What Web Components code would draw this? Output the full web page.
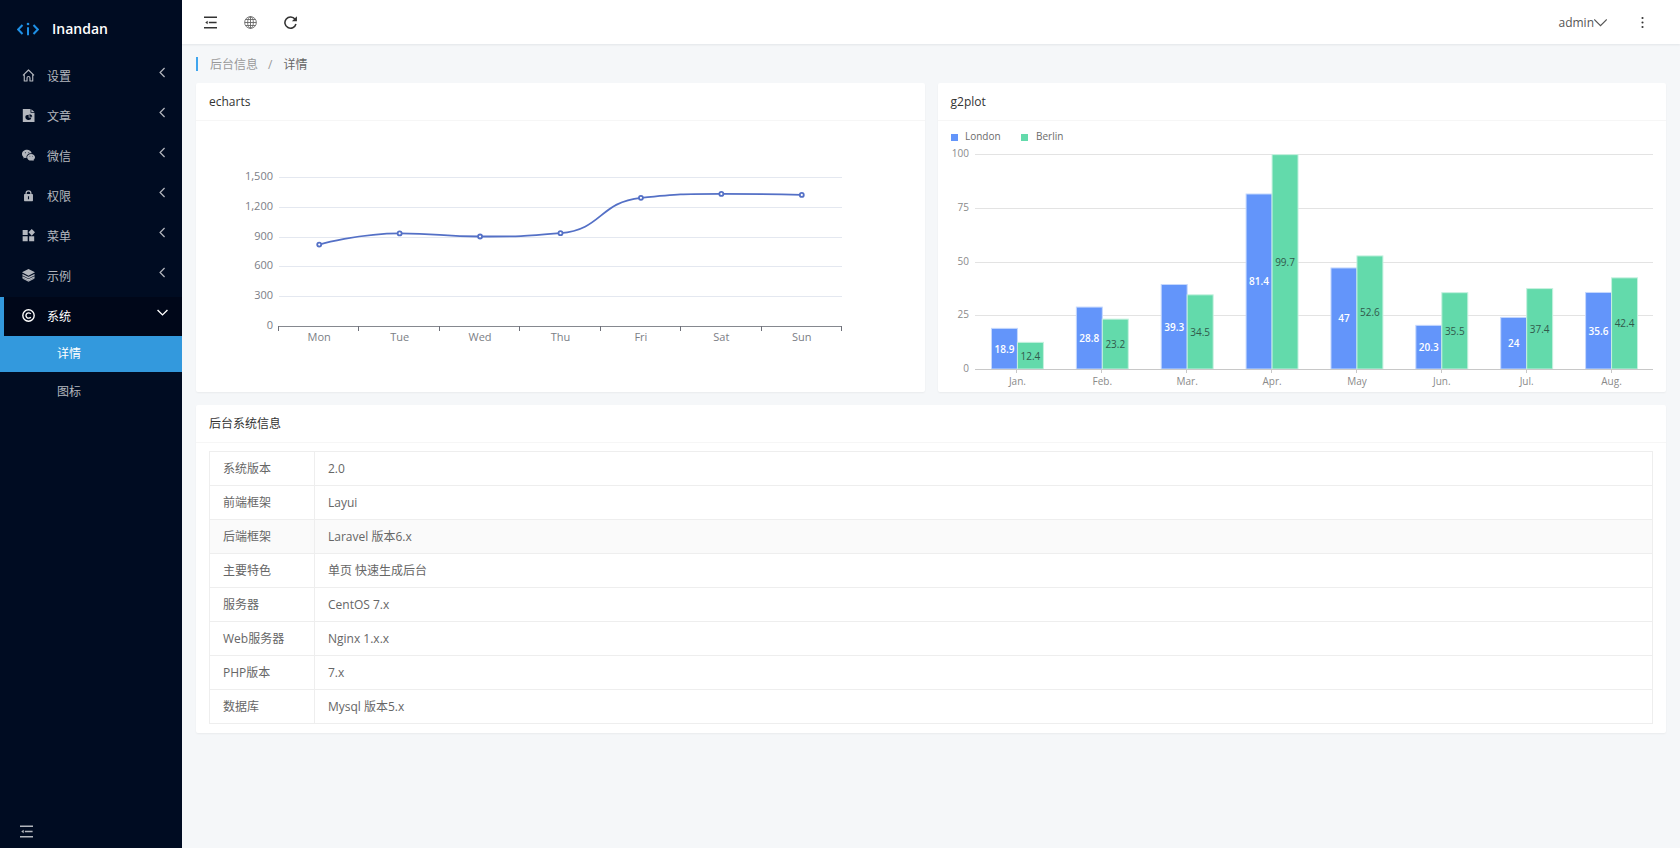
<!DOCTYPE html>
<html lang="zh-CN">
<head>
<meta charset="utf-8">
<meta name="viewport" content="width=device-width, initial-scale=1">
<title>Inandan</title>
<style>
html, body { margin: 0; height: 100%; }
body {
  font: 12px/20px "Open Sans", "Noto Sans CJK SC", sans-serif;
  color: #666;
  background: #f5f7f9;
}
</style>
</head>
<body>
<app-shell>
  <side-nav slot="side">
    <nav-group icon="home" label="设置"></nav-group>
    <nav-group icon="doc" label="文章"></nav-group>
    <nav-group icon="wechat" label="微信"></nav-group>
    <nav-group icon="lock" label="权限"></nav-group>
    <nav-group icon="blocks" label="菜单"></nav-group>
    <nav-group icon="layers" label="示例"></nav-group>
    <nav-group icon="copyright" label="系统" open>
      <nav-link href="#detail" active>详情</nav-link>
      <nav-link href="#icons">图标</nav-link>
    </nav-group>
  </side-nav>
  <top-bar slot="top" user="admin"></top-bar>
  <bread-crumb parent="后台信息" current="详情"></bread-crumb>
  <card-row>
    <panel-card heading="echarts"><line-chart></line-chart></panel-card>
    <panel-card heading="g2plot"><bar-chart></bar-chart></panel-card>
  </card-row>
  <panel-card heading="后台系统信息"><info-table></info-table></panel-card>
</app-shell>

<script>
const define = (name, template, setup) => {
  customElements.define(name, class extends HTMLElement {
    connectedCallback() {
      if (this.shadowRoot) return;
      const root = this.attachShadow({ mode: 'open' });
      root.innerHTML = typeof template === 'function' ? template(this) : template;
      if (setup) setup(this, root);
    }
  });
};

/* Icons share a 16-unit grid and take their colour from the text around them. */
const S = 'fill="none" stroke="currentColor"';
const ICONS = {
  logo: `<g ${S} stroke-width="2"><path d="M5.5 4 1.2 8.5l4.3 4.5M16.5 4l4.3 4.5-4.3 4.5"/><path d="M11 6.3v8"/></g><circle cx="11" cy="3" r="1.3" fill="currentColor"/>`,
  home: `<path ${S} stroke-width="1.4" stroke-linejoin="round" d="M1.200 7.800 8 1.200 14.800 7.800M2.800 6.500v8.300h3.400v-3.600c0-2.600 3.600-2.600 3.600 0v3.600h3.400V6.500"/>`,
  doc: `<path fill="currentColor" fill-rule="evenodd" d="M1 0h9.500v4.600h4.900V16H1zM11.500.2l3.800 3.500h-3.800zM4.200 9.300a3.800 3.800 0 0 0 7.500 1.200H8.200V7c-2.200 0-4 .9-4 2.300zM9.200 6.400v3h3.400c0-1.800-1.400-3-3.400-3z"/>`,
  wechat: `<path fill="currentColor" d="M6.200 1C2.800 1 0 3.200 0 6.100c0 1.600.8 2.900 2.100 3.900l-.5 1.800 2-1.100c.7.200 1.300.3 2 .3C5.100 7.500 8 5 12 5.300 11.300 2.800 9 1 6.200 1z"/><path fill="currentColor" d="M11.200 6c-2.800 0-4.900 1.900-4.900 4.100 0 2.400 2.200 4.200 4.900 4.200.6 0 1.200-.1 1.700-.3l1.500.8-.4-1.400c1.200-.8 2-1.900 2-3.300C16 7.800 13.800 6 11.200 6z"/><g fill="#3b4556"><circle cx="4.200" cy="4.500" r=".7"/><circle cx="8.300" cy="4.500" r=".7"/><circle cx="9.700" cy="9" r=".6"/><circle cx="13" cy="9" r=".6"/></g>`,
  lock: `<path fill="currentColor" fill-rule="evenodd" d="M4.300 6V5.200a3.700 3.700 0 0 1 7.400 0V6h.6c.7 0 1.200.5 1.200 1.200v6.600c0 .7-.5 1.200-1.200 1.200H3.700c-.7 0-1.200-.5-1.200-1.200V7.200C2.500 6.500 3 6 3.700 6zm1.500 0h4.400V5.200a2.200 2.200 0 0 0-4.400 0zM7.300 9v3.500h1.400V9z"/>`,
  blocks: `<path fill="currentColor" d="M.800 1.200h6.200v6.200H.8zM.8 9h6.200v6.200H.8zM8.800 9H15v6.200H8.800zM12 0l4 4.100-4 4.100-4-4.100z"/>`,
  layers: `<path fill="currentColor" d="M8 0l8 4.100-8 4.100L0 4.100z"/><path ${S} stroke-width="1.700" d="M.5 7 8 10.700 15.500 7M.5 9.800 8 13.500l7.500-3.700"/><path fill="currentColor" d="M.3 11.700 8 15.600l7.700-3.900-1-.6L8 14.300 1.300 11z"/>`,
  copyright: `<g ${S} stroke-width="1.700"><circle cx="8" cy="8" r="7"/><path d="M10.800 6a3.300 3.300 0 1 0 0 4"/></g>`,
  fold: `<path ${S} stroke-width="1.800" d="M0 1.500h16M6 8h9.500M0 14.500h16"/><path fill="currentColor" d="M1.500 8l3-2.300v4.600z"/>`,
  globe: `<g ${S} stroke-width="1.100"><circle cx="8" cy="8" r="7.200"/><ellipse cx="8" cy="8" rx="3.500" ry="7.200"/><path d="M8 .8v14.400M.8 8h14.400M2 4.300h12M2 11.700h12"/></g>`,
  refresh: `<path ${S} stroke-width="1.900" d="M13.600 4A6.900 6.900 0 1 0 14.700 9.800"/><path fill="currentColor" d="M15.900.4v6.200H9.700z"/>`,
  left: `<path ${S} stroke-width="1.800" d="M11 1.500 4.500 8l6.500 6.500"/>`,
  down: `<path ${S} stroke-width="2" d="M.8 4.500 8 11.500l7.200-7"/>`,
  thin: `<path ${S} stroke-width="1.400" d="M.3 4.200 8 11.800l7.700-7.600"/>`,
  more: `<g fill="currentColor"><circle cx="8" cy="2.500" r="1.300"/><circle cx="8" cy="8" r="1.300"/><circle cx="8" cy="13.500" r="1.300"/></g>`
};

define('ui-icon', el => {
  const name = el.getAttribute('name');
  return `<style>
    :host { display: block; flex: none; width: 13px; height: 13px; }
    svg { display: block; width: 100%; height: 100%; }
  </style><svg viewBox="0 0 ${name === 'logo' ? 22 : 16} 16" aria-hidden="true">${ICONS[name]}</svg>`;
});

define('app-shell', `<style>
  :host { display: grid; grid-template-columns: 182px minmax(0, 1fr); min-height: 100%; }
  .page { display: flex; flex-direction: column; min-width: 0; }
  main { display: flex; flex-direction: column; gap: 13px; padding: 0 14px 14px; }
</style>
<slot name="side"></slot>
<div class="page"><slot name="top"></slot><main><slot></slot></main></div>`);

define('side-nav', `<style>
  :host { display: flex; flex-direction: column; background: #000c22; color: #b3b7be; }
  header { display: flex; align-items: center; gap: 13px; height: 57px; padding-left: 17px; color: #fff; font-size: 14px; font-weight: 600; }
  header ui-icon { width: 22px; height: 16px; color: #1e90e6; }
  nav { display: flex; flex-direction: column; gap: 1px; flex: 1; }
  button { align-self: flex-start; margin: 0 0 2px 12px; padding: 8px; border: 0; background: none; color: inherit; }
</style>
<header><ui-icon name="logo"></ui-icon><span>Inandan</span></header>
<nav aria-label="主菜单"><slot></slot></nav>
<button type="button" aria-label="收起菜单"><ui-icon name="fold"></ui-icon></button>`);

define('nav-group', el => {
  const open = el.hasAttribute('open');
  return `<style>
    :host { display: block; }
    button { display: flex; align-items: center; width: 100%; height: 39px; padding: 0 14px 0 18px; border: 0; border-left: 4px solid transparent; background: none; color: inherit; font: inherit; text-align: left; }
    :host([open]) button { border-left-color: #3399dd; background: #000719; color: #fff; }
    span { flex: 1; padding-left: 12px; }
    ui-icon { margin-bottom: 2px; }
    .arrow { width: 11px; height: 11px; margin-bottom: 8px; }
    .sub { display: grid; gap: 2px; }
  </style>
  <button type="button" aria-expanded="${open}">
    <ui-icon name="${el.getAttribute('icon')}"></ui-icon>
    <span>${el.getAttribute('label')}</span>
    <ui-icon class="arrow" name="${open ? 'down' : 'left'}"></ui-icon>
  </button>
  <div class="sub"><slot></slot></div>`;
});

define('nav-link', el => `<style>
  :host { display: block; }
  a { display: flex; align-items: center; height: 36px; padding-left: 57px; color: inherit; text-decoration: none; }
  :host([active]) a { background: #3399dd; color: #fff; }
</style><a href="${el.getAttribute('href')}"><slot></slot></a>`);

define('top-bar', el => `<style>
  :host { display: flex; align-items: center; gap: 27px; height: 44px; padding: 0 31px 0 22px; background: #fff; color: #333; box-shadow: 0 1px 2px rgba(0, 21, 41, .08); }
  button { display: flex; align-items: center; padding: 0; border: 0; background: none; color: inherit; font: inherit; }
  .site { color: #666; }
  .user { margin-left: auto; padding-top: 2px; color: #555; }
  .user ui-icon { margin-bottom: 1px; }
  .more { margin-left: 2px; }
</style>
<button type="button" aria-label="收起菜单"><ui-icon name="fold"></ui-icon></button>
<button type="button" class="site" aria-label="网站"><ui-icon name="globe"></ui-icon></button>
<button type="button" aria-label="刷新"><ui-icon name="refresh"></ui-icon></button>
<button type="button" class="user">${el.getAttribute('user')}<ui-icon name="thin"></ui-icon></button>
<button type="button" class="more" aria-label="更多"><ui-icon name="more"></ui-icon></button>`);

define('bread-crumb', el => `<style>
  :host { display: flex; align-items: center; height: 14px; margin: 13px 0 -1px; padding-left: 12px; border-left: 2px solid #3fa5ee; }
  ol { display: flex; margin: 0; padding: 1px 0 0; list-style: none; color: #666; }
  a { color: #999; text-decoration: none; }
  li + li::before { content: "/"; padding: 0 11px 0 10px; color: #999; }
</style>
<nav aria-label="位置"><ol><li><a href="#">${el.getAttribute('parent')}</a></li><li aria-current="page">${el.getAttribute('current')}</li></ol></nav>`);

define('card-row', `<style>
  :host { display: grid; grid-template-columns: repeat(2, minmax(0, 1fr)); gap: 13px; }
</style><slot></slot>`);

define('panel-card', el => `<style>
  :host { display: block; border-radius: 2px; background: #fff; box-shadow: 0 1px 2px rgba(0, 0, 0, .05); }
  h2 { margin: 0; padding: 9px 13px 8px; border-bottom: 1px solid #f6f6f6; color: #333; font: inherit; }
  .body { padding: 0 13px; }
</style><h2>${el.getAttribute('heading')}</h2><div class="body"><slot></slot></div>`);

/* Charts redraw whenever the card changes width. */
const chart = (name, label, draw) => define(name, `<style>
  :host { display: block; height: 271px; }
  svg { display: block; width: 100%; height: 100%; font-size: 11px; }
</style><svg role="img" aria-label="${label}"></svg>`, (el, root) => {
  const svg = root.querySelector('svg');
  const render = () => { svg.innerHTML = draw(el.clientWidth); };
  render();
  new ResizeObserver(render).observe(el);
});

const clamp = (v, a, b) => Math.max(Math.min(a, b), Math.min(Math.max(a, b), v));

function smoothPath(p) {
  let d = `M${p[0]}`, cx = p[0][0], cy = p[0][1];
  for (let i = 1; i < p.length; i++) {
    const [x, y] = p[i];
    let ax = x, ay = y, bx = x, by = y;
    if (i < p.length - 1) {
      const [px, py] = p[i - 1], [nx, ny] = p[i + 1];
      const before = Math.hypot(x - px, y - py), after = Math.hypot(nx - x, ny - y);
      const k = .5 * after / (after + before);
      bx = clamp(x + (nx - px) * k, x, nx);
      by = clamp(y + (ny - py) * k, y, ny);
      ax = clamp(x - (bx - x) * before / after, px, x);
      ay = clamp(y - (by - y) * before / after, py, y);
      bx = x + (x - ax) * after / before;
      by = y + (y - ay) * after / before;
    }
    d += `C${cx} ${cy} ${ax} ${ay} ${x} ${y}`;
    cx = bx; cy = by;
  }
  return d;
}

chart('line-chart', '每周数据', w => {
  const days = ['Mon', 'Tue', 'Wed', 'Thu', 'Fri', 'Sat', 'Sun'];
  const values = [820, 932, 901, 934, 1290, 1330, 1320];
  const left = Math.round(w / 10), right = w - left, bottom = 205, height = 149;
  const step = (right - left) / days.length;
  const y = v => bottom - v * height / 1500;
  let out = '';
  for (let v = 0; v <= 1500; v += 300) {
    if (v) out += `<path d="M${left} ${Math.round(y(v)) + .5}H${right}" stroke="#e4e8f0"/>`;
    out += `<text x="${left - 6}" y="${Math.round(y(v)) + 3}" text-anchor="end" fill="#7b7e86">${v.toLocaleString('en-US')}</text>`;
  }
  out += `<path d="M${left} ${bottom + .5}H${right}" stroke="#85888f"/>`;
  for (let i = 0; i <= days.length; i++) {
    out += `<path d="M${Math.round(left + i * step) - .5} ${bottom}v5" stroke="#6e7079"/>`;
  }
  const points = values.map((v, i) => [left + (i + .5) * step, y(v)]);
  out += `<path d="${smoothPath(points)}" fill="none" stroke="#5470c6" stroke-width="1.800"/>`;
  points.forEach(([px, py], i) => {
    out += `<circle cx="${px}" cy="${py}" r="2" fill="#fff" stroke="#5470c6" stroke-width="1.800"/>
      <text x="${px}" y="${bottom + 15}" text-anchor="middle" fill="#7b7e86">${days[i]}</text>`;
  });
  return out;
});

chart('bar-chart', '伦敦与柏林每月数据', w => {
  const months = ['Jan.', 'Feb.', 'Mar.', 'Apr.', 'May', 'Jun.', 'Jul.', 'Aug.'];
  const london = [18.9, 28.8, 39.3, 81.4, 47, 20.3, 24, 35.6];
  const berlin = [12.4, 23.2, 34.5, 99.7, 52.6, 35.5, 37.4, 42.4];
  const left = 24, bottom = 248, height = 215, step = (w - left) / months.length;
  const bar = step * .306;
  const y = v => bottom - v * height / 100;
  let out = `<g font-size="10"><path fill="#6395fa" d="M0 13h7v7H0z"/><text x="14" y="19" fill="#6b6b6b">London</text>
    <path fill="#63daab" d="M70 13h7v7h-7z"/><text x="85" y="19" fill="#6b6b6b">Berlin</text>`;
  for (let v = 0; v <= 100; v += 25) {
    out += `<path d="M${left} ${Math.round(y(v)) + .5}H${w}" stroke="${v ? '#e3e3e3' : '#c8c8c8'}"/>
      <text x="${left - 6}" y="${Math.round(y(v)) + 3}" text-anchor="end" fill="#8a8a8a">${v}</text>`;
  }
  months.forEach((month, i) => {
    const x = left + (i + .5) * step;
    const column = (bx, v, fill, edge, text, weight) =>
      `<rect x="${bx}" y="${y(v)}" width="${bar}" height="${bottom - y(v)}" fill="${fill}" stroke="${edge}"/>
       <text x="${bx + bar / 2}" y="${Math.round(y(v / 2)) + 4}" text-anchor="middle" fill="${text}" font-weight="${weight}">${v}</text>`;
    out += column(x - bar, london[i], '#6395fa', '#c5d8fd', '#fff', 600)
      + column(x, berlin[i], '#63daab', '#c5f1df', '#31594b', 400)
      + `<path d="M${Math.round(x) - .5} ${bottom + 1}v3" stroke="#c8c8c8"/>
         <text x="${x}" y="${bottom + 16}" text-anchor="middle" fill="#8a8a8a">${month}</text>`;
  });
  return out + `<path d="M${left} ${bottom + .5}H${w}" stroke="#c8c8c8"/></g>`;
});

const INFO = [
  ['系统版本', '2.0'], ['前端框架', 'Layui'], ['后端框架', 'Laravel 版本6.x'], ['主要特色', '单页 快速生成后台'],
  ['服务器', 'CentOS 7.x'], ['Web服务器', 'Nginx 1.x.x'], ['PHP版本', '7.x'], ['数据库', 'Mysql 版本5.x']
];
define('info-table', `<style>
  :host { display: block; padding: 8px 0 9px; }
  table { width: 100%; border-collapse: collapse; table-layout: fixed; }
  col:first-child { width: 105px; }
  th, td { height: 33px; padding: 0 13px; border: 1px solid #eee; font-weight: 400; text-align: left; }
  tr.hover { background: #fafafa; }
</style>
<table><colgroup><col><col></colgroup><tbody>
${INFO.map(([k, v], i) => `<tr${i === 2 ? ' class="hover"' : ''}><th scope="row">${k}</th><td>${v}</td></tr>`).join('')}
</tbody></table>`);
</script>
</body>
</html>
